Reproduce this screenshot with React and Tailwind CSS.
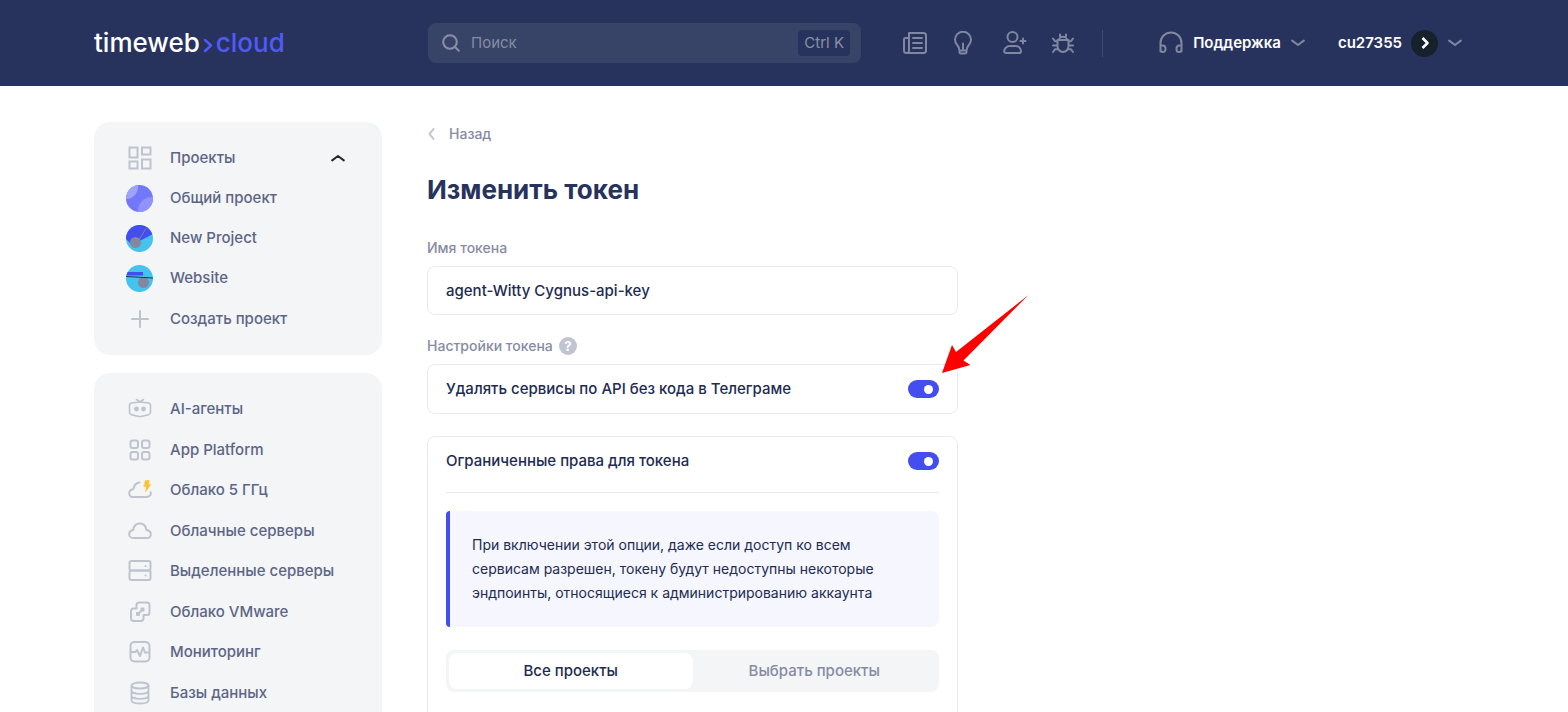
import React, { useState } from "react";

const strokeProps = {
  fill: "none",
  stroke: "currentColor",
  strokeWidth: 2,
  strokeLinecap: "round",
  strokeLinejoin: "round",
};

const Icon = ({ children, className = "w-6 h-6", viewBox = "0 0 24 24", ...rest }) => (
  <svg
    viewBox={viewBox}
    className={`shrink-0 ${className}`}
    aria-hidden="true"
    {...strokeProps}
    {...rest}
  >
    {children}
  </svg>
);

const ChevronDown = ({ className = "w-[14px] h-2" }) => (
  <Icon viewBox="0 0 14 8" className={className}>
    <path d="M1.2 1.6 7 6l5.8-4.4" />
  </Icon>
);

const NewsIcon = () => (
  <Icon>
    <path d="M6 2h14.5A2.5 2.5 0 0 1 23 4.5v15a2.5 2.5 0 0 1-2.5 2.5h-17A2.5 2.5 0 0 1 1 19.500V8.500A1.500 1.500 0 0 1 2.500 7H6M6 2v17.500A2.300 2.300 0 0 1 3.500 22M10 7h9M10 12h9M10 17h9" />
  </Icon>
);

const BulbIcon = () => (
  <Icon>
    <path d="M8.500 19.500c0-2-.8-3.600-2-5a8 8 0 1 1 11 0c-1.200 1.400-2 3-2 5V21a1.500 1.500 0 0 1-1.500 1.500h-4A1.500 1.500 0 0 1 8.500 21ZM8.500 19.500h7M12 12.500v7" />
  </Icon>
);

const UserPlusIcon = () => (
  <Icon>
    <circle cx="9.500" cy="6" r="5" />
    <path d="M7 15h5.500a5.500 5.500 0 0 1 5.500 5.200c0 1.200-.7 1.800-1.800 1.800H3c-1.100 0-1.800-.6-1.800-1.800A5.500 5.500 0 0 1 7 15ZM20 7.500v5M17.500 10h5" />
  </Icon>
);

const BugIcon = () => (
  <Icon>
    <path d="M6.500 9h11v6a5.500 6 0 0 1-11 0ZM8 9a4 3.200 0 0 1 8 0M9 3.500v1.800M15 3.500v1.800M2 7.500 4 10.200h2.500M22 7.500l-2 2.700h-2.500M2 14.500h4.500M22 14.500h-4.500M2 21l2.200-2.800h3M22 21l-2.200-2.800h-3" />
  </Icon>
);

const HeadphonesIcon = () => (
  <Icon>
    <path d="M1.500 20.500V12a10.500 10.500 0 0 1 21 0v8.500M1.500 14.500h2a3 3 0 0 1 3 3v1a2.500 2.500 0 0 1-5 0ZM22.500 14.500h-2a3 3 0 0 0-3 3v1a2.500 2.500 0 0 0 5 0Z" />
  </Icon>
);

const GridIcon = () => (
  <Icon strokeLinejoin="miter">
    <path d="M1.500 1.500h8v10h-8ZM14 1.500h8.500v7H14ZM1.500 15.500h8v7h-8ZM14 13.500h8.500v9H14Z" />
  </Icon>
);

const PlusIcon = () => (
  <Icon>
    <path d="M12 4v16M4 12h16" />
  </Icon>
);

const AgentIcon = () => (
  <Icon strokeWidth="1.6">
    <path d="M3.500 6 12 5l8.500 1c1.500.2 2 1 2 2.300v7c0 1.500-.6 2.200-2 2.500L12 19.800l-8.500-2c-1.400-.3-2-1-2-2.500v-7c0-1.300.5-2.100 2-2.300ZM12 5 8.500 2.500M12 5l3.500-2.500" />
    <circle cx="8.500" cy="12" r="1.600" fill="currentColor" />
    <circle cx="15.500" cy="12" r="1.600" fill="currentColor" />
  </Icon>
);

const AppsIcon = () => (
  <Icon>
    <rect x="2.500" y="2.500" width="7.500" height="7.500" rx="2" />
    <rect x="14" y="2.500" width="7.500" height="7.500" rx="2" />
    <rect x="2.500" y="14" width="7.500" height="7.500" rx="2" />
    <rect x="14" y="14" width="7.500" height="7.500" rx="2" />
  </Icon>
);

const FastCloudIcon = () => (
  <Icon>
    <path d="M11.500 4.500C8 5 5.800 7.500 5.500 11 3 11.500 1.200 13.200 1.200 15.200c0 2.200 1.600 3.800 4 3.800h13.500c2.700 0 4.300-2 4.100-4.800" />
    <path
      d="M17.500 2.500h3.800l-1 4h2.500l-5.300 7.500 1-5.500H16Z"
      fill="#fbc12f"
      stroke="#fbc12f"
      strokeWidth="0.5"
    />
  </Icon>
);

const CloudIcon = () => (
  <Icon>
    <path d="M5 19a3.800 3.800 0 0 1-3.800-3.800c0-2.200 1.600-3.700 4-4.200C5.800 7 8.300 4.500 11.800 4.500s6 2.500 6.700 6.500c2.700.4 4.300 2 4.300 4.200 0 2.300-1.700 3.800-4 3.800Z" />
  </Icon>
);

const ServersIcon = () => (
  <Icon>
    <rect x="1.500" y="2" width="21" height="9.500" rx="2" />
    <rect x="1.500" y="11.500" width="21" height="9.500" rx="2" />
    <path d="M17.500 7h.1M17.500 16.500h.1" />
  </Icon>
);

const VmwareIcon = () => (
  <Icon>
    <path d="M8.500 8.500V5A2.500 2.500 0 0 1 11 2.500h8A2.500 2.500 0 0 1 21.500 5v7.500A2.500 2.500 0 0 1 19 15h-3.500v3.500A2.500 2.500 0 0 1 13 21H5.500A2.500 2.500 0 0 1 3 18.500V11a2.500 2.500 0 0 1 2.500-2.500Z" />
    <path d="M13.500 8.500h2v2h-2ZM9 13h2v2H9ZM11 13l2.500-2.500" />
  </Icon>
);

const MonitorIcon = () => (
  <Icon>
    <rect x="2.500" y="2" width="19" height="19.500" rx="4" />
    <path d="M3 12h4.500l1.500-2 3 6 3-8.500 2 5h4" />
  </Icon>
);

const DatabaseIcon = () => (
  <Icon strokeWidth="1.8">
    <ellipse cx="12" cy="4.500" rx="8.500" ry="3" />
    <path d="M3.500 4.500v14.800c0 2 3.800 3.200 8.500 3.200s8.500-1.200 8.500-3.200V4.500M3.500 9.500c0 2 3.800 3.300 8.500 3.300s8.500-1.300 8.500-3.300M3.500 14.500c0 2 3.800 3.300 8.500 3.300s8.500-1.300 8.500-3.300M7.500 12v.1M7.500 17v.1" />
  </Icon>
);

const CommonAvatar = () => (
  <svg viewBox="0 0 27 27" className="w-[27px] h-[27px] rounded-full" aria-hidden="true">
    <rect width="27" height="27" fill="#7378fb" />
    <circle cx="0" cy="2" r="12" fill="#9fa2fb" />
    <circle cx="26" cy="26" r="14" fill="#8f93fb" />
  </svg>
);

const NewProjectAvatar = () => (
  <svg viewBox="0 0 27 27" className="w-[27px] h-[27px] rounded-full" aria-hidden="true">
    <rect width="27" height="27" fill="#45c3ee" />
    <path d="M0 0h27v9L6 20 0 14Z" fill="#444dee" />
    <path d="M20 3.500 11 18" stroke="#7d8299" strokeWidth="1" />
    <circle cx="9.500" cy="17.500" r="5.500" fill="#8388a0" />
  </svg>
);

const WebsiteAvatar = () => (
  <svg viewBox="0 0 27 27" className="w-[27px] h-[27px] rounded-full" aria-hidden="true">
    <rect width="27" height="27" fill="#45c3ee" />
    <rect y="7" width="17" height="3.500" fill="#444dee" />
    <circle cx="17.500" cy="17.500" r="5.500" fill="#8388a0" />
    <path d="M0 11.500 27 13" stroke="#1f3252" strokeWidth="1" />
  </svg>
);

const projects = [
  { title: "Общий проект", avatar: <CommonAvatar /> },
  { title: "New Project", avatar: <NewProjectAvatar /> },
  { title: "Website", avatar: <WebsiteAvatar /> },
];

const services = [
  { title: "AI-агенты", icon: <AgentIcon /> },
  { title: "App Platform", icon: <AppsIcon /> },
  { title: "Облако 5 ГГц", icon: <FastCloudIcon /> },
  { title: "Облачные серверы", icon: <CloudIcon /> },
  { title: "Выделенные серверы", icon: <ServersIcon /> },
  { title: "Облако VMware", icon: <VmwareIcon /> },
  { title: "Мониторинг", icon: <MonitorIcon /> },
  { title: "Базы данных", icon: <DatabaseIcon /> },
];

const headerLinks = [
  { title: "Новости", icon: <NewsIcon />, className: "ml-[42px]" },
  { title: "Идеи", icon: <BulbIcon />, className: "ml-6" },
  { title: "Пригласить", icon: <UserPlusIcon />, className: "ml-7" },
  { title: "Сообщить об ошибке", icon: <BugIcon />, className: "ml-6" },
];

const Header = () => (
  <header className="shrink-0 bg-[#27335d]">
    <div className="mx-auto flex h-[86px] max-w-[1380px] items-center">
      <a
        href="#home"
        className="flex w-[334px] shrink-0 items-center text-[26px] leading-8 font-medium text-white"
      >
        timeweb
        <Icon viewBox="0 0 10 16" className="mx-[3px] mt-1 h-4 w-[10px] text-[#5059fb]" strokeWidth="2.5">
          <path d="m2 3 6 5.500L2 14" />
        </Icon>
        <span className="text-[#5059fb]">cloud</span>
      </a>

      <label className="flex h-10 w-[433px] min-w-0 items-center rounded-lg bg-[#384368] pr-[11px] pl-[14px] text-[#8990a6]">
        <Icon viewBox="0 0 18 18" className="h-[18px] w-[18px]">
          <circle cx="8" cy="8" r="6.800" />
          <path d="m13 13 3.800 3.800" />
        </Icon>
        <input
          type="search"
          aria-label="Поиск"
          placeholder="Поиск"
          className="ml-[11px] min-w-0 flex-1 bg-transparent text-[15px] outline-none placeholder:text-[#858ca3]"
        />
        <kbd className="rounded bg-[#27335d] px-[6px] font-['Inter',sans-serif] text-[15px] leading-[26px]">
          Ctrl K
        </kbd>
      </label>

      <nav className="flex items-center text-[#8087a0]">
        {headerLinks.map((link) => (
          <a key={link.title} href="#" aria-label={link.title} className={link.className}>
            {link.icon}
          </a>
        ))}
      </nav>

      <div className="ml-[27px] h-[27px] w-px bg-[#3f4a70]" />

      <div className="ml-auto flex items-center pr-3 text-[15px] font-semibold text-white">
        <button className="flex items-center">
          <span className="text-[#8087a0]">
            <HeadphonesIcon />
          </span>
          <span className="mr-[10px] ml-[10px]">Поддержка</span>
          <span className="text-[#8087a0]">
            <ChevronDown />
          </span>
        </button>
        <button className="ml-[33px] flex items-center">
          cu27355
          <span className="mr-[10px] ml-[9px] flex h-[27px] w-[27px] items-center justify-center rounded-full bg-[#17212b]">
            <Icon viewBox="0 0 12 12" className="h-3 w-3" strokeWidth="2.5" strokeLinecap="butt">
              <path d="m3.500 1 5 5-5 5" />
            </Icon>
          </span>
          <span className="text-[#8087a0]">
            <ChevronDown />
          </span>
        </button>
      </div>
    </div>
  </header>
);

const SidebarRow = ({ icon, children }) => (
  <a href="#" className="flex items-center">
    <span className="flex w-[27px] shrink-0 justify-center text-[#bfc3ce]">{icon}</span>
    <span className="ml-[17px]">{children}</span>
  </a>
);

const Sidebar = () => {
  const [open, setOpen] = useState(true);

  return (
    <aside className="flex w-72 shrink-0 flex-col gap-[18px] text-[15px] font-medium text-[#5d6586]">
      <div className="rounded-2xl bg-[#f3f5f7] pt-4 pr-[37px] pb-4 pl-8">
        <div className={open ? "grid h-[201px] auto-rows-fr" : "grid auto-rows-[40px]"}>
          <button onClick={() => setOpen(!open)} className="flex items-center">
            <span className="flex w-[27px] justify-center text-[#bfc3ce]">
              <GridIcon />
            </span>
            <span className="ml-[17px] flex-1 text-left">Проекты</span>
            <span className="text-[#26282e]">
              <ChevronDown
                className={open ? "h-2 w-[14px] rotate-180" : "h-2 w-[14px]"}
              />
            </span>
          </button>
          {open &&
            projects.map((project) => (
              <SidebarRow key={project.title} icon={project.avatar}>
                {project.title}
              </SidebarRow>
            ))}
          {open && <SidebarRow icon={<PlusIcon />}>Создать проект</SidebarRow>}
        </div>
      </div>

      <nav className="rounded-2xl bg-[#f3f5f7] pt-4 pr-[37px] pb-8 pl-8">
        <div className="grid h-[324px] auto-rows-fr">
          {services.map((service) => (
            <SidebarRow key={service.title} icon={service.icon}>
              {service.title}
            </SidebarRow>
          ))}
        </div>
      </nav>
    </aside>
  );
};

const Toggle = ({ id, checked, onChange }) => (
  <input
    id={id}
    type="checkbox"
    role="switch"
    checked={checked}
    onChange={(e) => onChange(e.target.checked)}
    className="flex h-[18px] w-[31px] shrink-0 cursor-pointer appearance-none items-center rounded-full bg-[#c1c3d1] px-[6px] before:h-[9px] before:w-[9px] before:rounded-full before:bg-white checked:justify-end checked:bg-[#444dee]"
  />
);

const Arrow = () => (
  <svg
    viewBox="0 0 90 80"
    className="pointer-events-none absolute -top-[71px] -right-[73px] h-20 w-[90px]"
    aria-hidden="true"
  >
    <path d="M2 79 12 51l4 7L88.500 1 23.500 66.500 30.500 71Z" fill="#ff0000" />
  </svg>
);

const TokenForm = () => {
  const [name, setName] = useState("agent-Witty Cygnus-api-key");
  const [canDelete, setCanDelete] = useState(true);
  const [restricted, setRestricted] = useState(true);
  const [scope, setScope] = useState("all");

  const activeTab = "flex-1 rounded-lg bg-white text-[#212b52]";
  const idleTab = "flex-1 rounded-lg text-[#868ba4]";

  return (
    <main className="w-full max-w-[531px] text-[15px] leading-6 font-medium text-[#212b52]">
      <a href="#back" className="flex items-center text-sm leading-6 text-[#868ba4]">
        <Icon viewBox="0 0 10 14" className="h-[14px] w-[10px] text-[#bfc3ce]">
          <path d="M6.500 2 2.500 7l4 5" />
        </Icon>
        <span className="ml-3">Назад</span>
      </a>

      <h1 className="mt-6 text-[26px] leading-10 font-bold text-[#27335d]">
        Изменить токен
      </h1>

      <label
        htmlFor="token-name"
        className="mt-[26px] block text-sm leading-6 text-[#868ba4]"
      >
        Имя токена
      </label>
      <input
        id="token-name"
        type="text"
        value={name}
        onChange={(e) => setName(e.target.value)}
        className="mt-[6px] h-[49px] w-full rounded-lg border border-[#e9eaef] px-[18px] outline-none"
      />

      <div className="mt-[19px] flex items-center text-sm leading-6 text-[#868ba4]">
        Настройки токена
        <button
          aria-label="Подсказка"
          className="ml-[6px] h-[18px] w-[18px] rounded-full bg-[#c1c3d1] text-[13px] leading-[18px] font-bold text-white"
        >
          ?
        </button>
      </div>

      <div className="relative mt-[6px] flex h-[50px] items-center justify-between rounded-lg border border-[#e9eaef] px-[18px]">
        <label htmlFor="delete-services">Удалять сервисы по API без кода в Телеграме</label>
        <Toggle id="delete-services" checked={canDelete} onChange={setCanDelete} />
        <Arrow />
      </div>

      <div className="mt-[22px] rounded-lg border border-[#e9eaef] px-[18px] pb-10">
        <div className="flex items-center justify-between border-b border-[#e9eaef] pt-3 pb-[19px]">
          <label htmlFor="restricted">Ограниченные права для токена</label>
          <Toggle id="restricted" checked={restricted} onChange={setRestricted} />
        </div>

        <div className="mt-[18px] overflow-hidden rounded-l-sm rounded-r-lg bg-[#f5f6fe]">
          <p className="border-l-4 border-[#444dee] py-[22px] pr-10 pl-[22px] text-sm leading-6 font-normal">
            При включении этой опции, даже если доступ ко всем сервисам разрешен,
            токену будут недоступны некоторые эндпоинты, относящиеся к
            администрированию аккаунта
          </p>
        </div>

        <div className="mt-[23px] flex h-[42px] rounded-lg bg-[#f3f5f7] p-[3px]">
          <button
            onClick={() => setScope("all")}
            className={scope === "all" ? activeTab : idleTab}
          >
            Все проекты
          </button>
          <button
            onClick={() => setScope("some")}
            className={scope === "some" ? activeTab : idleTab}
          >
            Выбрать проекты
          </button>
        </div>
      </div>
    </main>
  );
};

export default function App() {
  return (
    <div className="flex h-screen flex-col bg-white font-['Inter',sans-serif]">
      <Header />
      <div className="min-h-0 flex-1 overflow-y-auto [scrollbar-width:none]">
        <div className="mx-auto flex max-w-[1380px] gap-[45px] pt-9">
          <Sidebar />
          <TokenForm />
        </div>
      </div>
    </div>
  );
}
